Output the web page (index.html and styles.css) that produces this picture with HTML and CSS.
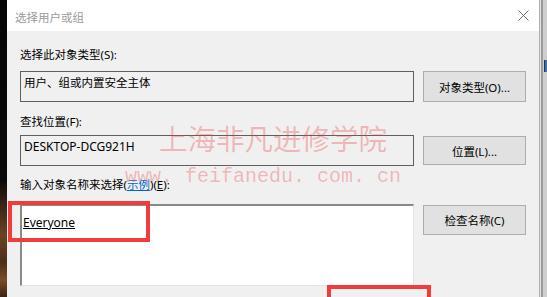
FILE: index.html
```html
<!DOCTYPE html>
<html lang="zh-CN">
<head>
<meta charset="utf-8">
<title>选择用户或组</title>
<link rel="stylesheet" href="styles.css">
</head>
<body>
<div class="page">
  <div class="edge-left"></div>
  <div class="dialog">
    <div class="titlebar">
      <span class="title">选择用户或组</span>
      <svg class="close" width="11" height="11" viewBox="0 0 11 11"><path d="M0.5 0.5 L10.5 10.5 M10.5 0.5 L0.5 10.5" stroke="#6e6e6e" stroke-width="1" fill="none"/></svg>
    </div>
    <div class="content">
      <div class="label l1">选择此对象类型(S):</div>
      <div class="row">
        <div class="field">用户、组或内置安全主体</div>
        <div class="btn">对象类型(O)...</div>
      </div>
      <div class="label l2">查找位置(F):</div>
      <div class="row">
        <div class="field field-latin">DESKTOP-DCG921H</div>
        <div class="btn btn-inset">位置(L)...</div>
      </div>
      <div class="label l3">输入对象名称来选择(<span class="link">示例</span>)(<u>E</u>):</div>
      <div class="row">
        <div class="names"><span class="name">Everyone</span></div>
        <div class="btn btn-top">检查名称(C)</div>
      </div>
    </div>
  </div>
  <div class="edge-right"><div class="edge-tab"></div></div>

  <div class="wm wm-cn">上海非凡进修学院</div>
  <div class="wm wm-url">www. feifanedu. com. cn</div>
  <div class="mark mark-a"></div>
  <div class="mark mark-b"></div>
</div>
</body>
</html>
```
FILE: styles.css
```css
html, body {
  margin: 0;
  padding: 0;
}
body {
  width: 547px;
  height: 297px;
  overflow: hidden;
  background: #f0f0f0;
  font-family: "Noto Sans", "Noto Sans CJK SC", sans-serif;
  font-size: 12px;
  color: #000;
}
.page {
  position: relative;
  display: flex;
  width: 547px;
  height: 297px;
  overflow: hidden;
}
.edge-left {
  width: 7px;
  flex: none;
  background: linear-gradient(to bottom, #050505 0, #0c0a09 180px, #3a2414 205px, #6a4222 235px, #4b2e18 262px, #7a4d28 280px, #3a2414 297px);
}
.dialog {
  width: 532px;
  flex: none;
  background: #f0f0f0;
  display: flex;
  flex-direction: column;
}
.titlebar {
  height: 31px;
  flex: none;
  background: #fff;
  display: flex;
  align-items: center;
  padding-left: 8px;
}
.title {
  color: #9a9a9a;
  font-family: "Noto Sans CJK SC", sans-serif;
  font-size: 11.5px;
  line-height: 16px;
  margin-top: 2px;
}
.close {
  margin-left: auto;
  margin-right: 10px;
}
.content {
  padding: 16px 0 0 13px;
  display: flex;
  flex-direction: column;
}
.label {
  height: 16px;
  line-height: 16px;
  font-size: 11.5px;
  white-space: nowrap;
}
.l1 { margin-bottom: 8px; }
.l2 { margin-top: 12px; margin-bottom: 5px; }
.l3 { margin-top: 11px; margin-bottom: 11px; }
.link {
  color: #0066cc;
  text-decoration: underline;
}
.row {
  display: flex;
  gap: 9px;
}
.field {
  width: 394px;
  height: 31px;
  box-sizing: border-box;
  border: 1px solid #5f5f5f;
  padding: 3px 0 0 3px;
  line-height: 16px;
  font-size: 11.5px;
  white-space: nowrap;
}
.field-latin {
  font-size: 12px;
}
.btn {
  width: 103px;
  height: 31px;
  box-sizing: border-box;
  background: #e1e1e1;
  border: 1px solid #adadad;
  display: flex;
  align-items: center;
  justify-content: center;
  font-size: 11.5px;
  white-space: nowrap;
}
.btn-inset {
  height: 29px;
  align-self: center;
}
.btn-top {
  height: 30px;
  margin-top: 1px;
}
.names {
  width: 394px;
  height: 82px;
  box-sizing: border-box;
  background: #fff;
  border-style: solid;
  border-width: 2px 1px 1px 2px;
  border-color: #8a8a8a #e3e3e3 #e3e3e3 #8a8a8a;
  padding: 9px 0 0 1px;
  line-height: 16px;
  font-size: 12px;
}
.name {
  text-decoration: underline;
}
.edge-right {
  width: 8px;
  flex: none;
  display: flex;
  flex-direction: column;
  background: linear-gradient(to right, #b0b0b0 0, #b0b0b0 1px, #e2e2e2 1px, #e2e2e2 2px, #9a9a9a 2px, #9a9a9a 4px, #cfcfcf 4px, #cfcfcf 8px);
}
.edge-tab {
  margin: 60px 0 0 5px;
  width: 3px;
  height: 12px;
  background: #3b6fa8;
  border-left: 1px solid #333;
}
.wm {
  position: absolute;
  pointer-events: none;
  white-space: nowrap;
  line-height: 1;
  color: rgba(236, 60, 60, 0.32);
}
.wm-cn {
  left: 159px;
  top: 124px;
  font-family: "Noto Sans CJK SC", sans-serif;
  font-size: 28.5px;
}
.wm-url {
  left: 125px;
  top: 167px;
  font-family: "Liberation Mono", monospace;
  font-size: 20px;
}
.mark {
  position: absolute;
  border: 4px solid #f23c3c;
  box-sizing: border-box;
}
.mark-a {
  left: 8px;
  top: 201px;
  width: 142px;
  height: 41px;
}
.mark-b {
  left: 327px;
  top: 285px;
  width: 104px;
  height: 12px;
  border-bottom-width: 0;
}
```
